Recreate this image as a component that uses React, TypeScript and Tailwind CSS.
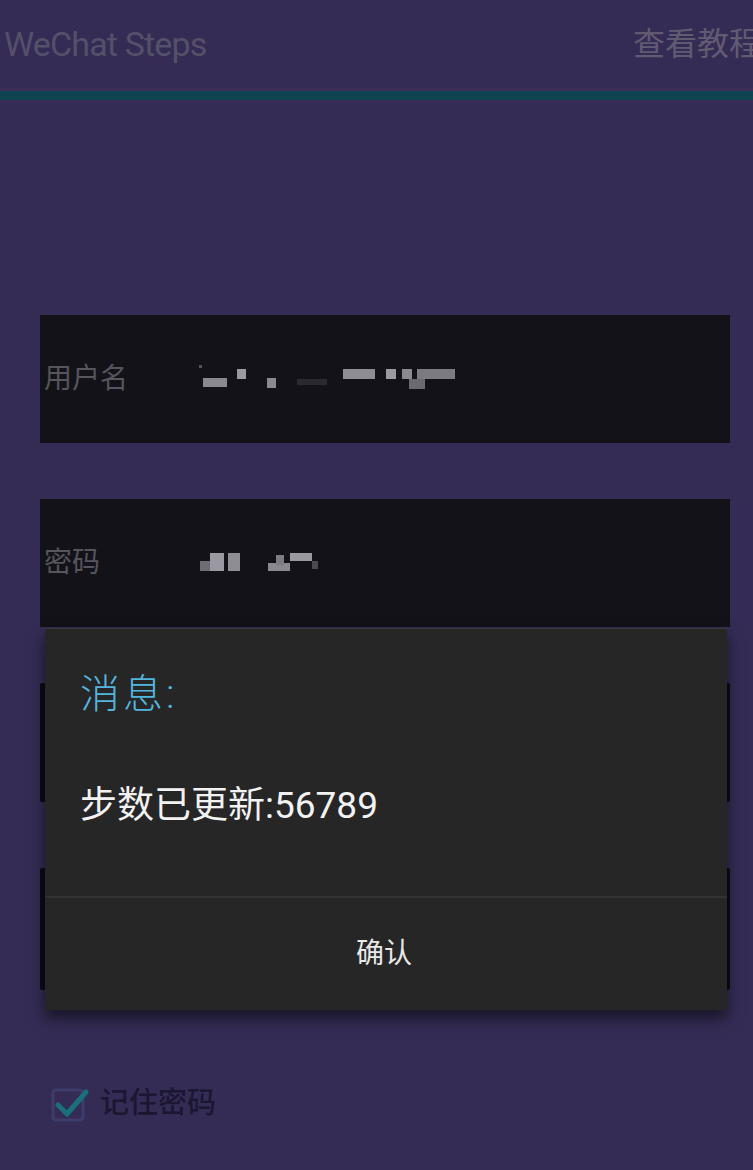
// Login screen with a "steps updated" message box on top
const FONT = "font-['Roboto','Noto_Sans_CJK_SC',sans-serif]";

function UserMosaic() {
  // pixelated account name
  return (
    <svg width="280" height="30" viewBox="0 0 280 30" className="block">
      <rect x="6" y="13" width="24" height="9" fill="#8a8890" />
      <rect x="40" y="4" width="9" height="10" fill="#9a98a0" />
      <rect x="70" y="13" width="9" height="10" fill="#8a8890" />
      <rect x="100" y="14" width="30" height="6" fill="#2a2830" />
      <rect x="146" y="4" width="32" height="10" fill="#8e8c94" />
      <rect x="189" y="4" width="10" height="10" fill="#9a98a0" />
      <rect x="205" y="4" width="10" height="10" fill="#8a8890" />
      <rect x="220" y="4" width="38" height="10" fill="#7c7a82" />
      <rect x="212" y="14" width="16" height="10" fill="#6a6870" />
      <rect x="2" y="0" width="3" height="3" fill="#55535a" />
    </svg>
  );
}

function PassMosaic() {
  return (
    <svg width="160" height="30" viewBox="0 0 160 30" className="block">
      <rect x="0" y="12" width="12" height="10" fill="#6e6c74" />
      <rect x="10" y="4" width="14" height="18" fill="#9a98a0" />
      <rect x="28" y="4" width="12" height="18" fill="#8e8c94" />
      <rect x="68" y="14" width="22" height="8" fill="#8a8890" />
      <rect x="76" y="6" width="8" height="10" fill="#7c7a82" />
      <rect x="90" y="4" width="22" height="8" fill="#9a98a0" />
      <rect x="112" y="12" width="6" height="8" fill="#4a4850" />
    </svg>
  );
}

function Field({ label, children }: { label: string; children: React.ReactNode }) {
  return (
    <div className="h-[128px] bg-[#141219] flex items-center pl-[4px]">
      <span className="w-[156px] text-[28px] text-[#56545c]">{label}</span>
      {children}
    </div>
  );
}

export default function App() {
  return (
    <div className={`w-[753px] h-[1170px] bg-[#342c54] overflow-hidden relative ${FONT}`}>
      {/* toolbar */}
      <div className="h-[88px] flex items-center pl-[4px] -mr-[8px]">
        <span className="text-[34px] text-[#55506a] tracking-tight">WeChat Steps</span>
        <span className="ml-auto text-[32px] text-[#615b72] whitespace-nowrap">查看教程</span>
      </div>
      <div className="h-[3px] bg-[#3e2d58]" />
      <div className="h-[9px] bg-[#0e4550]" />
      <div className="h-[3px] bg-[#3b2c57]" />

      <div className="pl-[40px] pr-[23px] pt-[212px] flex flex-col">
        <Field label="用户名">
          <div className="-ml-[3px] mt-[2px]">
            <UserMosaic />
          </div>
        </Field>
        <div className="h-[56px]" />
        <Field label="密码">
          <div className="mt-[2px]">
            <PassMosaic />
          </div>
        </Field>
        <div className="h-[119px] bg-[#0c0a18] rounded-[2px] mt-[56px]" />
        <div className="h-[122px] bg-[#0c0a18] rounded-[2px] mt-[66px]" />
      </div>

      {/* remember password */}
      <div className="flex items-center gap-[10px] pl-[50px] mt-[92px]">
        <svg width="40" height="36" viewBox="0 0 40 36">
          <rect x="3" y="4" width="30" height="30" rx="3" fill="none" stroke="#3d3c6a" strokeWidth="3" />
          <path d="M8 19 L17 28 L36 6" fill="none" stroke="#17707a" strokeWidth="5" strokeLinecap="round" strokeLinejoin="round" />
        </svg>
        <span className="text-[29px] text-[#1b1632] font-medium">记住密码</span>
      </div>

      {/* message dialog */}
      <div className="absolute left-[45px] top-[628px] w-[682px] h-[382px] bg-[#262626] shadow-[0_8px_14px_rgba(0,0,0,0.55)] flex flex-col">
        <div className="h-px bg-[#3a3a3a]" />
        <div className="flex-1 px-[35px]">
          <div className="pt-[46px] text-[40px] leading-none text-[#52b6dc] font-light tracking-[3px]">消息:</div>
          <div className="pt-[72px] text-[37px] leading-none text-[#f2f2f2]">步数已更新:56789</div>
        </div>
        <div className="h-[2px] bg-[#333333]" />
        <div className="h-[112px] flex items-center justify-center text-[28px] text-[#e8e8e8] pr-[4px]">确认</div>
      </div>
    </div>
  );
}
